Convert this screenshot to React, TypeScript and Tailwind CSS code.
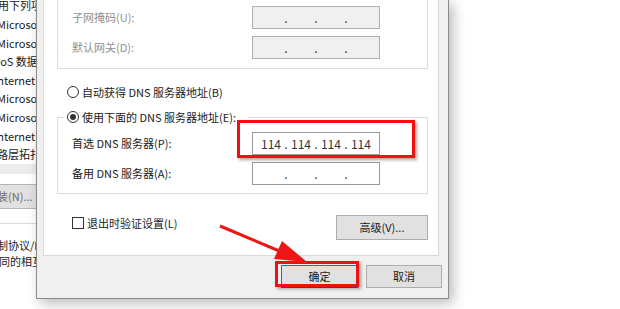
import { Fragment } from 'react';

const font = "font-['Noto_Sans_CJK_SC',sans-serif]";

function IpBox({ values, disabled }: { values?: string[]; disabled?: boolean }) {
  const parts = values ?? ['', '', '', ''];
  return (
    <div
      className={`flex h-[23px] w-[128px] items-center border px-[5px] text-[12px] text-[#333] ${
        disabled ? 'border-[#b0b0b0] bg-[#f0f0f0]' : 'border-[#9a9a9a] bg-white'
      }`}
    >
      {parts.map((p, i) => (
        <Fragment key={i}>
          {i > 0 && <span className="w-[4px] text-center leading-none">.</span>}
          <span className="w-[27px] text-center leading-none">{p}</span>
        </Fragment>
      ))}
    </div>
  );
}

function Radio({ checked }: { checked?: boolean }) {
  return (
    <span className="flex h-[12px] w-[12px] shrink-0 items-center justify-center rounded-full border border-[#333] bg-white">
      {checked && <span className="h-[6px] w-[6px] rounded-full bg-[#333]" />}
    </span>
  );
}

function Row({ label, disabled, values }: { label: string; disabled?: boolean; values?: string[] }) {
  return (
    <div className="flex h-[23px] items-center">
      <span className={`w-[180px] ${disabled ? 'text-[#8f8f8f]' : 'text-[#1a1a1a]'}`}>{label}</span>
      <IpBox disabled={disabled} values={values} />
    </div>
  );
}

const listItems: [string, string][] = [
  ['Microsoft 网络客户端', '-ml-[3px]'],
  ['Microsoft 网络的文件和打印机共享', '-ml-[3px]'],
  ['QoS 数据包计划程序', '-ml-[8px]'],
  ['Internet 协议版本 4 (TCP/IPv4)', '-ml-[6px]'],
  ['Microsoft 网络适配器多路传送器协议', '-ml-[3px]'],
  ['Microsoft LLDP 协议驱动程序', '-ml-[3px]'],
  ['Internet 协议版本 6 (TCP/IPv6)', '-ml-[6px]'],
  ['链路层拓扑发现响应程序', '-ml-[14px]'],
];

export default function App() {
  return (
    <div className={`relative h-[309px] w-[620px] overflow-hidden bg-white text-[11px] ${font}`}>
      {/* window behind */}
      <div className="absolute left-0 top-0 flex h-[309px] w-[36px] flex-col overflow-hidden bg-white text-[#1a1a1a]">
        <div className="-ml-[46px] -mt-[3px] h-[16px] whitespace-nowrap leading-[16px]">此连接使用下列项目:</div>
        <div className="mt-[2px] flex flex-col">
          {listItems.map(([t, ml]) => (
            <div key={t} className={`h-[18.6px] whitespace-nowrap leading-[18.6px] ${ml}`}>
              {t}
            </div>
          ))}
        </div>
        <div className="h-[10px] bg-[#ececec]" />
        <div className="mt-[10px] flex h-[25px] items-center border-y border-[#b5b5b5] bg-[#e1e1e1] text-[#6a6a6a]">
          <span className="-ml-[14px] whitespace-nowrap">安装(N)...</span>
        </div>
        <div className="mt-[14px] border-t border-[#dcdcdc]" />
        <div className="mt-[13px] whitespace-nowrap leading-[16px]">
          <div className="-ml-[36px]">传输控制协议/Internet 协议。</div>
          <div className="-ml-[1px]">同的相互连接的网络上通信。</div>
        </div>
      </div>

      {/* dialog */}
      <div className="absolute left-[36px] top-0 flex h-[299px] w-[413px] flex-col border-x border-b border-[#8a8a8a] bg-[#f0f0f0] text-[#1a1a1a] shadow-[4px_4px_12px_rgba(0,0,0,0.28)]">
        <div className="ml-[6px] flex h-[256px] w-[396px] flex-col border-x border-b border-[#d9d9d9] bg-white">
          <div className="ml-[13px] flex h-[69px] w-[371px] flex-col gap-[7px] border-x border-b border-[#dcdcdc] pl-[14px] pt-[6px]">
            <Row label="子网掩码(U):" disabled />
            <Row label="默认网关(D):" disabled />
          </div>

          <div className="ml-[23px] mt-[15px] flex h-[16px] items-center gap-[3px]">
            <Radio />
            <span>自动获得 DNS 服务器地址(B)</span>
          </div>

          <fieldset className="ml-[13px] mt-[9px] w-[371px] border border-[#dcdcdc] pb-[8px] pl-[14px]">
            <legend className="-ml-[8px] flex h-[16px] items-center gap-[3px] pl-[3px] pr-[12px]">
              <Radio checked />
              <span>使用下面的 DNS 服务器地址(E):</span>
            </legend>
            <div className="mt-[7px] flex flex-col gap-[7px]">
              <Row label="首选 DNS 服务器(P):" values={['114', '114', '114', '114']} />
              <Row label="备用 DNS 服务器(A):" />
            </div>
          </fieldset>

          <div className="mt-[21px] flex items-start justify-between pl-[28px] pr-[10px]">
            <div className="mt-[2px] flex items-center gap-[3px]">
              <span className="h-[12px] w-[12px] border border-[#333] bg-white" />
              <span className="leading-[12px]">退出时验证设置(L)</span>
            </div>
            <div className="flex h-[25px] w-[92px] items-center justify-center border border-[#adadad] bg-[#e1e1e1]">
              高级(V)...
            </div>
          </div>
        </div>

        <div className="mt-[9px] flex justify-end gap-[8px] pr-[6px]">
          <div className="flex h-[23px] w-[77px] items-center justify-center border border-[#0078d7] bg-[#e1e1e1]">
            确定
          </div>
          <div className="flex h-[23px] w-[76px] items-center justify-center border border-[#adadad] bg-[#e1e1e1]">
            取消
          </div>
        </div>
      </div>

      {/* annotations */}
      <div className="pointer-events-none absolute left-[237px] top-[120px] h-[38px] w-[178px] border-[3px] border-[#f01010] shadow-[2px_2px_3px_rgba(0,0,0,0.35)]" />
      <div className="pointer-events-none absolute left-[275px] top-[261px] h-[26px] w-[84px] border-[3px] border-[#f01010] shadow-[2px_2px_3px_rgba(0,0,0,0.35)]" />
      <svg className="pointer-events-none absolute left-0 top-0" width="620" height="309" viewBox="0 0 620 309">
        <line x1="220" y1="226" x2="284" y2="253" stroke="#ee1515" strokeWidth="3" />
        <polygon points="307,262 274,259 282,241" fill="#ee1515" />
      </svg>
    </div>
  );
}
